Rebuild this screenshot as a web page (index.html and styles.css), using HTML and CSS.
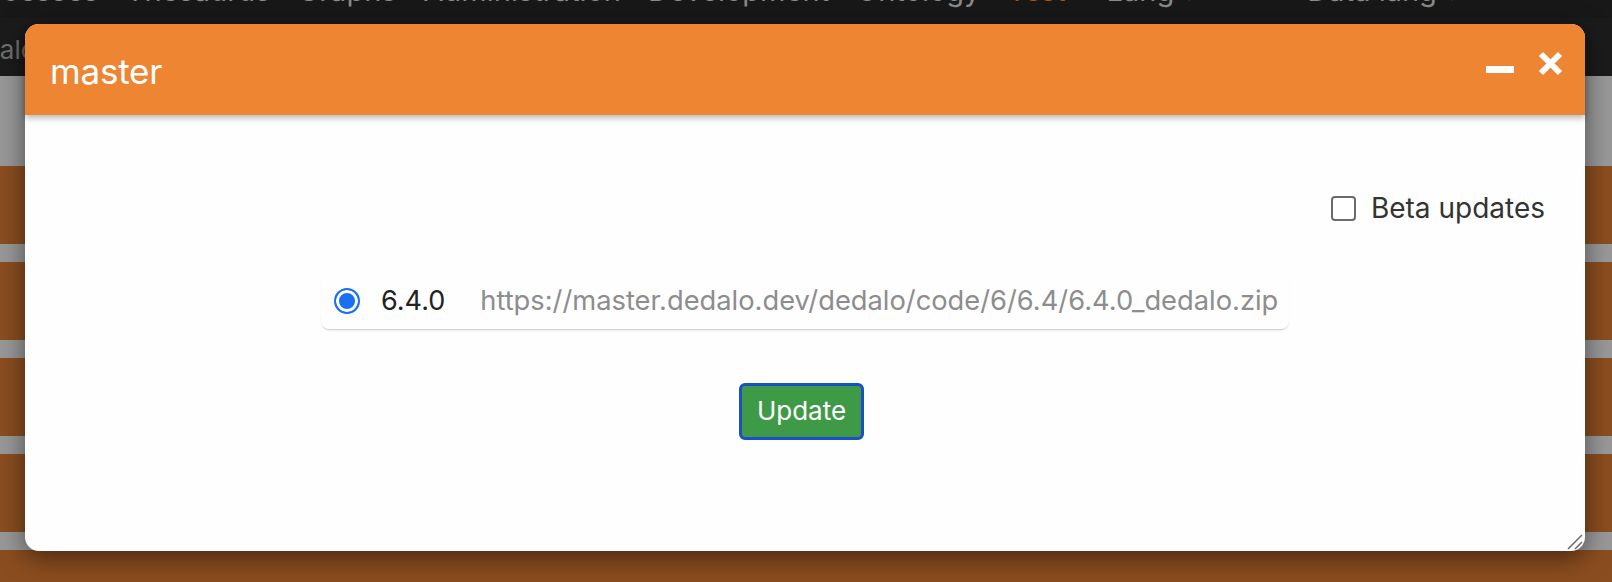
FILE: index.html
```html
<!DOCTYPE html>
<html lang="en">
<head>
<meta charset="utf-8">
<title>master</title>
<link rel="stylesheet" href="styles.css">
</head>
<body>
<div class="page">
  <nav class="menu">
    <span class="menu-item">Processes</span>
    <span class="menu-item">Thesaurus</span>
    <span class="menu-item">Graphs</span>
    <span class="menu-item">Administration</span>
    <span class="menu-item">Development</span>
    <span class="menu-item">Ontology</span>
    <span class="menu-item test">Test</span>
    <span class="menu-item lang">Lang ▾</span>
    <span class="menu-item lang2">Data lang ▾</span>
  </nav>
  <div class="subbar"><span class="crumb">Dedalo</span></div>
  <div class="content">
    <div class="content-head"></div>
    <div class="rows">
      <div class="row"></div>
      <div class="row"></div>
      <div class="row"></div>
      <div class="row"></div>
      <div class="row"></div>
    </div>
  </div>
</div>

<div class="modal">
  <header class="modal-header">
    <h1 class="modal-title">master</h1>
    <div class="modal-tools">
      <svg class="icon-min" width="28" height="7" viewBox="0 0 28 7"><rect width="28" height="7" fill="#fff"/></svg>
      <svg class="icon-close" width="25" height="25" viewBox="0 0 25 25"><path d="M3 3 L22 22 M22 3 L3 22" stroke="#fff" stroke-width="6" stroke-linecap="butt"/></svg>
    </div>
  </header>
  <div class="modal-body">
    <label class="beta">
      <input type="checkbox" class="check">
      <span>Beta updates</span>
    </label>
    <label class="version-row">
      <input type="radio" class="radio" name="v" checked>
      <span class="version">6.4.0</span>
      <span class="url">https://master.dedalo.dev/dedalo/code/6/6.4/6.4.0_dedalo.zip</span>
    </label>
    <button class="btn-update">Update</button>
  </div>
  <svg class="resize" width="16" height="16" viewBox="0 0 16 16"><path d="M1 15 L15 1 M8 15 L15 8" stroke="#6a6a6a" stroke-width="1.5"/></svg>
</div>
</body>
</html>
```

FILE: styles.css
```css
html, body {
  margin: 0;
  padding: 0;
}
body {
  width: 1612px;
  height: 582px;
  overflow: hidden;
  position: relative;
  font-family: Inter, "Noto Sans", "Liberation Sans", sans-serif;
  background: #8a4d1f;
}
.page {
  display: flex;
  flex-direction: column;
  height: 582px;
  overflow: hidden;
}
.menu {
  flex: none;
  background: #181818;
  display: flex;
  align-items: flex-end;
  padding-bottom: 12px;
  box-sizing: content-box;
  height: 6px;
  overflow: hidden;
  margin-left: -44px;
}
.menu-item {
  font-size: 29px;
  line-height: 30px;
  color: #8a8a8a;
  margin-right: 27px;
  white-space: nowrap;
}
.menu-item.test { color: #a9561c; }
.menu-item.lang { margin-left: 14px; margin-right: 110px; }
.subbar {
  flex: none;
  height: 58px;
  background: #1b1b1b;
  display: flex;
  align-items: center;
  overflow: hidden;
}
.crumb {
  font-size: 26px;
  color: #6f6f6f;
  margin-left: -50px;
  margin-top: 4px;
}
.content {
  flex: 1;
  min-height: 0;
  overflow: hidden;
  background: #989898;
  display: flex;
  flex-direction: column;
}
.content-head { height: 90px; flex: none; }
.rows {
  flex: none;
  display: flex;
  flex-direction: column;
  gap: 18px;
}
.row {
  flex: none;
  height: 78px;
  background: #8a4d1f;
}

.modal {
  position: absolute;
  left: 25px;
  top: 24px;
  width: 1560px;
  height: 527px;
  background: #fefefe;
  border-radius: 14px;
  box-shadow: 0 6px 26px rgba(0, 0, 0, 0.5);
  display: flex;
  flex-direction: column;
}
.modal-header {
  flex: none;
  height: 91px;
  background: #ed8533;
  border-radius: 14px 14px 0 0;
  box-shadow: 0 3px 6px rgba(0, 0, 0, 0.28);
  display: flex;
  align-items: center;
  justify-content: space-between;
  padding: 0 22px 0 25px;
  position: relative;
  z-index: 1;
}
.modal-title {
  margin: 0;
  font-size: 35px;
  font-weight: 400;
  color: #fff;
  letter-spacing: -0.2px;
  margin-top: 2px;
}
.modal-tools {
  display: flex;
  align-items: flex-start;
  gap: 24px;
  height: 25px;
  margin-top: -12px;
}
.icon-min { margin-top: 15px; display: block; }
.icon-close { display: block; }

.modal-body {
  flex: 1;
  display: flex;
  flex-direction: column;
  align-items: center;
  padding: 80px 40px 0;
}
.beta {
  align-self: flex-end;
  display: flex;
  align-items: center;
  gap: 15px;
  font-size: 28px;
  color: #333;
  height: 26px;
}
.check {
  appearance: none;
  -webkit-appearance: none;
  margin: 0;
  width: 25px;
  height: 25px;
  border: 2px solid #6b6b6b;
  border-radius: 4px;
  background: #fff;
}
.version-row {
  margin-top: 51px;
  width: 943px;
  display: flex;
  align-items: center;
  padding: 12px 12px 12px 13px;
  border-radius: 8px;
  box-shadow: 0 2px 2px -1px rgba(0, 0, 0, 0.22);
  font-size: 27px;
}
.radio {
  appearance: none;
  -webkit-appearance: none;
  margin: 0;
  width: 26px;
  height: 26px;
  border-radius: 50%;
  border: 2px solid #1b6ff3;
  background: #1b6ff3;
  box-shadow: inset 0 0 0 3px #fff;
  flex: none;
}
.version {
  margin-left: 21px;
  color: #222;
}
.url {
  margin-left: 35px;
  color: #8d8d8d;
  white-space: nowrap;
  font-size: 27.3px;
}
.btn-update {
  margin-top: 54px;
  margin-right: 7px;
  font-family: inherit;
  font-size: 26px;
  color: #fff;
  background: #3f9a48;
  border: 3px solid #1a4fc6;
  border-radius: 6px;
  padding: 9px 15px 10px;
  line-height: 32px;
}
.resize {
  position: absolute;
  right: 2px;
  bottom: 1px;
}
```
